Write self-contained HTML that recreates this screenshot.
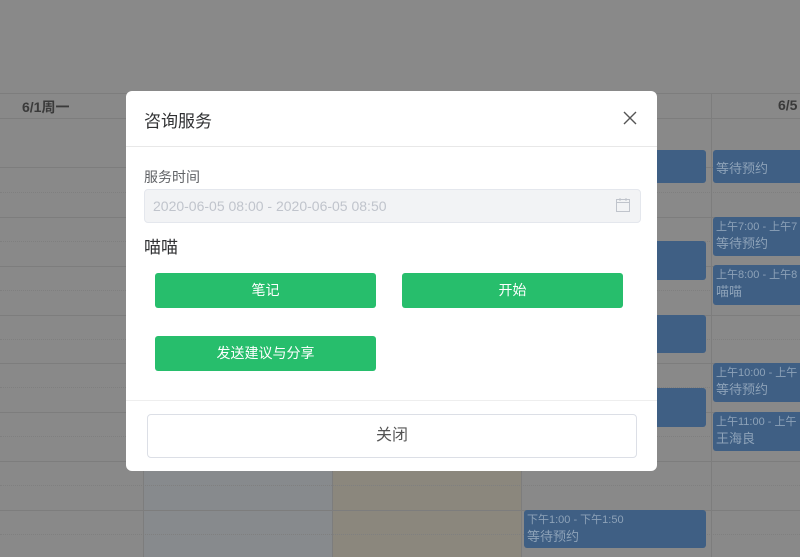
<!DOCTYPE html>
<html><head><meta charset="utf-8"><style>
*{margin:0;padding:0;box-sizing:border-box}
body{width:800px;height:557px;overflow:hidden;background:#898989;position:relative;font-family:"Liberation Sans","Noto Sans CJK SC",sans-serif}
.a{position:absolute}
.h{position:absolute;left:0;width:800px;height:1px;background:#7d7d7d}
.d{position:absolute;left:0;width:800px;height:0;border-top:1px dotted #7f7f7f}
.v{position:absolute;top:93px;bottom:0;width:1px;background:#7d7d7d}
.ev{position:absolute;background:#3f5f84;border-radius:3px;color:#8da2b8;font-size:11px;line-height:16px;padding:2px 3px;overflow:hidden;white-space:nowrap}
.ev b{display:block;font-weight:normal;font-size:13px;line-height:18px}
.btn{position:absolute;background:#27be6c;border-radius:3px;color:#fff;font-size:14px;text-align:center;line-height:34px;height:35px;width:221px}
</style></head><body>
<div class="a" style="left:332px;top:168px;width:189px;bottom:0;background:#8b877d"></div>
<div class="a" style="left:143px;top:168px;width:189px;bottom:0;background:#878a8d"></div>
<div class="h" style="top:93px"></div><div class="h" style="top:118px"></div><div class="h" style="top:167px"></div>
<div class="h" style="top:217px"></div><div class="h" style="top:266px"></div><div class="h" style="top:315px"></div><div class="h" style="top:363px"></div><div class="h" style="top:412px"></div><div class="h" style="top:461px"></div><div class="h" style="top:510px"></div>
<div class="d" style="top:192px"></div><div class="d" style="top:241px"></div><div class="d" style="top:290px"></div><div class="d" style="top:339px"></div><div class="d" style="top:387px"></div><div class="d" style="top:436px"></div><div class="d" style="top:485px"></div><div class="d" style="top:534px"></div>
<div class="v" style="left:143px"></div><div class="v" style="left:332px"></div><div class="v" style="left:521px"></div><div class="v" style="left:711px"></div>
<div class="a" style="left:22px;top:97px;font-size:14px;font-weight:bold;color:#3a3a3a">6/1周一</div>
<div class="a" style="left:778px;top:97px;font-size:14px;font-weight:bold;color:#3a3a3a">6/5</div>
<div class="ev" style="left:524px;top:150px;width:182px;height:33px">上午6:00</div>
<div class="ev" style="left:524px;top:241px;width:182px;height:39px"></div>
<div class="ev" style="left:524px;top:315px;width:182px;height:38px"></div>
<div class="ev" style="left:524px;top:388px;width:182px;height:39px"></div>
<div class="ev" style="left:524px;top:510px;width:182px;height:38px">下午1:00 - 下午1:50<b>等待预约</b></div>
<div class="ev" style="left:713px;top:150px;width:90px;height:33px"><b style="margin-top:8px">等待预约</b></div>
<div class="ev" style="left:713px;top:217px;width:90px;height:39px">上午7:00 - 上午7<b>等待预约</b></div>
<div class="ev" style="left:713px;top:265px;width:90px;height:40px">上午8:00 - 上午8<b>喵喵</b></div>
<div class="ev" style="left:713px;top:363px;width:90px;height:39px">上午10:00 - 上午<b>等待预约</b></div>
<div class="ev" style="left:713px;top:412px;width:90px;height:39px">上午11:00 - 上午<b>王海良</b></div>

<div class="a" style="left:126px;top:91px;width:531px;height:380px;background:#fff;border-radius:6px">
<div class="a" style="left:18px;top:16px;font-size:17px;color:#303133">咨询服务</div>
<svg class="a" style="left:497px;top:20px" width="14" height="14" viewBox="0 0 14 14"><path d="M1 1L13 13M13 1L1 13" stroke="#555" stroke-width="1.4"/></svg>
<div class="a" style="left:0;top:55px;width:531px;height:1px;background:#e8e8e8"></div>
<div class="a" style="left:18px;top:76px;font-size:14px;color:#606266">服务时间</div>
<div class="a" style="left:18px;top:98px;width:497px;height:34px;background:#f2f3f5;border:1px solid #e4e7ed;border-radius:4px;font-size:14px;color:#c0c4cc;line-height:32px;padding-left:8px">2020-06-05 08:00 - 2020-06-05 08:50</div>
<svg class="a" style="left:490px;top:107px" width="14" height="14" viewBox="0 0 14 14"><rect x="0.5" y="1.5" width="13" height="12" fill="none" stroke="#c0c4cc"/><path d="M0.5 4.5H13.5M4 0V3M10 0V3" stroke="#c0c4cc"/></svg>
<div class="a" style="left:18px;top:142px;font-size:17px;color:#303133">喵喵</div>
<div class="btn" style="left:29px;top:182px">笔记</div>
<div class="btn" style="left:276px;top:182px">开始</div>
<div class="btn" style="left:29px;top:245px">发送建议与分享</div>
<div class="a" style="left:0;top:309px;width:531px;height:1px;background:#eee"></div>
<div class="a" style="left:21px;top:323px;width:490px;height:44px;border:1px solid #dcdfe6;border-radius:4px;text-align:center;line-height:42px;font-size:16px;color:#555">关闭</div>
</div>
</body></html>
